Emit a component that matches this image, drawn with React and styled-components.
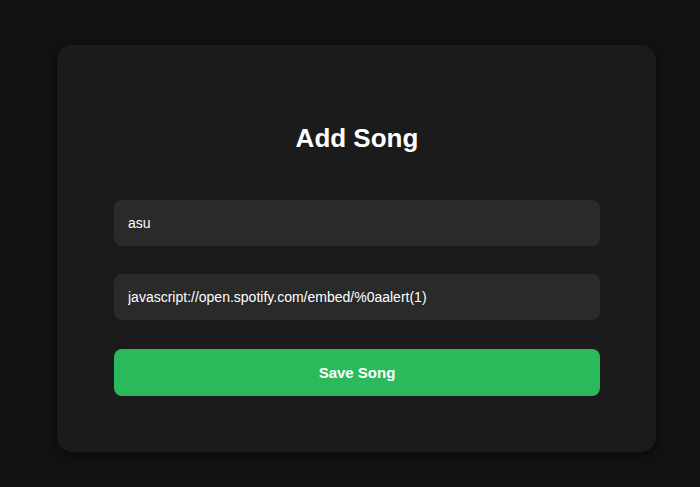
import React from 'react';
import styled, { createGlobalStyle } from 'styled-components';

const GlobalStyle = createGlobalStyle`
  * { box-sizing: border-box; }
  body {
    margin: 0;
    background: #121212;
    font-family: "Liberation Sans", Arial, sans-serif;
    color: #fff;
  }
`;

function App() {
  return (
    <Page>
      <GlobalStyle />
      <Card>
        <Title>Add Song</Title>
        <Form onSubmit={(e) => e.preventDefault()}>
          <Field type="text" defaultValue="asu" />
          <Field type="text" defaultValue="javascript://open.spotify.com/embed/%0aalert(1)" />
          <SaveButton type="submit">Save Song</SaveButton>
        </Form>
      </Card>
    </Page>
  );
}

export default App;

const Page = styled.div`
  min-height: 487px;
  padding: 45px 44px 36px 57px;
`;

const Card = styled.div`
  width: 599px;
  background: #1b1b1b;
  border-radius: 15px;
  padding: 56px 56px 56px 57px;
  box-shadow: 0 4px 14px rgba(0, 0, 0, 0.5);
`;

const Title = styled.h2`
  margin: 22px 0 47px;
  text-align: center;
  font-size: 26px;
  font-weight: bold;
  line-height: 30px;
`;

const Form = styled.form`
  display: flex;
  flex-direction: column;
  gap: 28px;
`;

const Field = styled.input`
  height: 46px;
  width: 100%;
  padding: 0 14px;
  border: none;
  border-radius: 8px;
  background: #2a2a2a;
  color: #fff;
  font-family: inherit;
  font-size: 14px;
  outline: none;
`;

const SaveButton = styled.button`
  height: 47px;
  width: 100%;
  border: none;
  border-radius: 8px;
  background: #2bba5b;
  color: #fff;
  font-family: inherit;
  font-size: 15px;
  font-weight: bold;
  cursor: pointer;
  margin-top: 1px;
`;
